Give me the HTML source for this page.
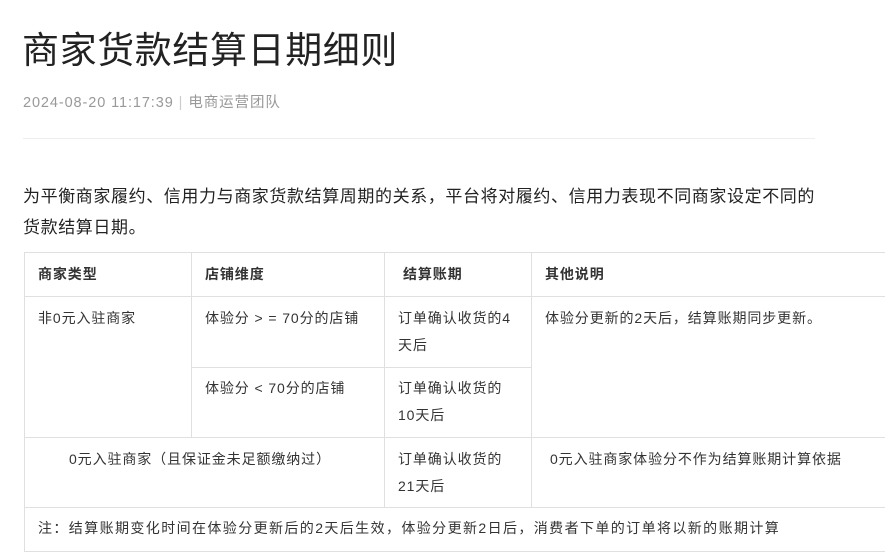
<!DOCTYPE html>
<html><head><meta charset="utf-8"><style>
body{margin:0;background:#fff;width:885px;height:560px;overflow:hidden;font-family:"Liberation Sans","Noto Sans CJK SC",sans-serif;color:#333;position:relative}
.a{position:absolute;white-space:nowrap}
.h{position:absolute;background:#e0e0e0;height:1px}
.v{position:absolute;background:#e0e0e0;width:1px}
.t{font-size:14px;line-height:27px;letter-spacing:0.9px}
b{font-weight:bold}
</style></head><body>
<div class="a" style="left:22px;top:26px;font-size:37px;color:#222;line-height:50px;letter-spacing:0.6px">商家货款结算日期细则</div>
<div class="a" style="left:23px;top:93px;font-size:14.5px;color:#999;line-height:20px;letter-spacing:0.9px">2024-08-20 11:17:39<span style="margin:0 5px;color:#ccc">|</span>电商运营团队</div>
<div class="h" style="left:23px;top:138px;width:792px;background:#eee"></div>
<div class="a" style="left:23px;top:181px;font-size:17px;line-height:31px;color:#222;letter-spacing:0.6px">为平衡商家履约、信用力与商家货款结算周期的关系，平台将对履约、信用力表现不同商家设定不同的<br>货款结算日期。</div>
<div class="h" style="left:24px;top:252px;width:861px"></div>
<div class="h" style="left:24px;top:296px;width:861px"></div>
<div class="h" style="left:191px;top:367px;width:340px"></div>
<div class="h" style="left:24px;top:437px;width:861px"></div>
<div class="h" style="left:24px;top:507px;width:861px"></div>
<div class="h" style="left:24px;top:551px;width:861px"></div>
<div class="v" style="left:24px;top:252px;height:300px"></div>
<div class="v" style="left:191px;top:252px;height:185px"></div>
<div class="v" style="left:384px;top:252px;height:255px"></div>
<div class="v" style="left:531px;top:252px;height:255px"></div>
<div class="a t" style="left:38px;top:261px"><b>商家类型</b></div>
<div class="a t" style="left:205px;top:261px"><b>店铺维度</b></div>
<div class="a t" style="left:403px;top:261px"><b>结算账期</b></div>
<div class="a t" style="left:545px;top:261px"><b>其他说明</b></div>
<div class="a t" style="left:38px;top:305px">非0元入驻商家</div>
<div class="a t" style="left:205px;top:305px">体验分 &gt; = 70分的店铺</div>
<div class="a t" style="left:398px;top:305px">订单确认收货的4<br>天后</div>
<div class="a t" style="left:545px;top:305px">体验分更新的2天后，结算账期同步更新。</div>
<div class="a t" style="left:205px;top:375px">体验分 &lt; 70分的店铺</div>
<div class="a t" style="left:398px;top:375px">订单确认收货的<br>10天后</div>
<div class="a t" style="left:69px;top:446px">0元入驻商家（且保证金未足额缴纳过）</div>
<div class="a t" style="left:398px;top:446px">订单确认收货的<br>21天后</div>
<div class="a t" style="left:550px;top:446px">0元入驻商家体验分不作为结算账期计算依据</div>
<div class="a t" style="left:38px;top:515px;letter-spacing:1.4px">注：结算账期变化时间在体验分更新后的2天后生效，体验分更新2日后，消费者下单的订单将以新的账期计算</div>
</body></html>
